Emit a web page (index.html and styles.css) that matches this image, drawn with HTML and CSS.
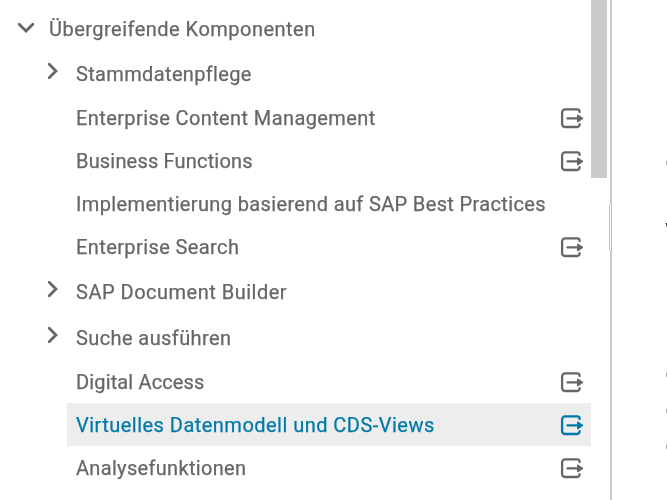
FILE: index.html
```html
<!DOCTYPE html>
<html lang="de">
<head>
<meta charset="utf-8">
<title>Übergreifende Komponenten</title>
<link rel="stylesheet" href="styles.css">
</head>
<body>
<svg class="defs" aria-hidden="true">
  <symbol id="exit" viewBox="0 0 24 22">
    <path d="M19.6 5V4.6A2.4 2.4 0 0 0 17.2 2.4H5.2A3.1 3.1 0 0 0 2.1 5.5V16.9A3.1 3.1 0 0 0 5.2 20H17.2A2.4 2.4 0 0 0 19.6 17.6V17.2" />
    <path d="M7.5 11.4H20" />
    <path class="head" d="M17.8 8.3L22.4 11.4L17.8 14.5Z" />
  </symbol>
  <symbol id="chevron" viewBox="0 0 12 18"><path d="M2.2 2.2L9 9L2.2 15.8" /></symbol>
</svg>
<div class="app">
  <nav class="tree">
    <div class="row root"><svg class="chevron"><use href="#chevron"/></svg><span class="label top">Übergreifende Komponenten</span></div>
    <div class="row branch first"><svg class="chevron"><use href="#chevron"/></svg><span class="label master">Stammdatenpflege</span></div>
    <div class="row"><span class="label content">Enterprise Content Management</span><svg class="exit"><use href="#exit"/></svg></div>
    <div class="row"><span class="label functions">Business Functions</span><svg class="exit"><use href="#exit"/></svg></div>
    <div class="row"><span class="label practices">Implementierung basierend auf SAP Best Practices</span></div>
    <div class="row"><span class="label search">Enterprise Search</span><svg class="exit"><use href="#exit"/></svg></div>
    <div class="row branch"><svg class="chevron"><use href="#chevron"/></svg><span class="label builder">SAP Document Builder</span></div>
    <div class="row branch"><svg class="chevron"><use href="#chevron"/></svg><span class="label run">Suche ausführen</span></div>
    <div class="row"><span class="label access">Digital Access</span><svg class="exit"><use href="#exit"/></svg></div>
    <div class="row selected"><span class="label views">Virtuelles Datenmodell und CDS-Views</span><svg class="exit"><use href="#exit"/></svg></div>
    <div class="row"><span class="label analysis">Analysefunktionen</span><svg class="exit"><use href="#exit"/></svg></div>
  </nav>
  <div class="scrollbar"><div class="thumb"></div></div>
  <div class="splitter"><div class="grip"></div></div>
  <main class="page"><p>e</p><p class="title">V</p><p class="gap">e</p><p>e</p><p>e</p></main>
</div>
</body>
</html>
```

FILE: styles.css
```css
* { box-sizing: border-box; }
body { margin: 0; background: #fff; color: #666; font: 20px/24px Roboto, "Noto Sans", sans-serif; overflow: hidden; }
.defs { position: absolute; width: 0; height: 0; }
.app { display: flex; width: 667px; height: 500px; overflow: hidden; will-change: transform; }
.tree { width: 591px; flex: none; }
.row { display: flex; align-items: center; height: 43px; margin-left: 67px; padding: 0 7px 0 9px; white-space: nowrap; }
.root { height: 51px; margin-left: 0; padding: 6px 0 0 21px; }
.branch { height: 46px; margin-left: 0; padding: 2px 0 0 47px; }
.first { height: 45px; padding-top: 0; }
.label { flex: 1; letter-spacing: .4px; -webkit-text-stroke: .25px currentColor; }
.top { letter-spacing: .48px; }
.master { letter-spacing: .35px; }
.functions { letter-spacing: .18px; }
.practices { letter-spacing: .36px; }
.builder { letter-spacing: .5px; }
.access { letter-spacing: .14px; }
.views { letter-spacing: .47px; }
.analysis { letter-spacing: .32px; }
.chevron { width: 12px; height: 18px; flex: none; margin-right: 17px; transform: translateY(-3px); }
.root .chevron { margin-right: 16px; transform: translate(-1px, -1px) rotate(90deg); }
.chevron, .exit { fill: none; stroke: currentColor; stroke-width: 2.8; stroke-linecap: round; }
.exit { width: 24px; height: 22px; stroke-width: 2.3; flex: none; stroke-linejoin: round; }
.exit .head, .head { fill: currentColor; stroke-width: 1.6; }
.selected { background: #ededed; color: #0079a8; }
.scrollbar { width: 16px; flex: none; }
.thumb { height: 178px; background: #cbcbcb; }
.splitter { position: relative; width: 2px; margin-left: 3px; background: #cbcbcb; flex: none; }
.grip { position: absolute; left: -1px; top: 205px; width: 3px; height: 45px; border: solid #bbb; border-width: 0 1px; background: #fff; }
.page { width: 55px; flex: none; padding: 149px 0 0 53.5px; }
.page p { margin: 0 0 12px; }
.page .title { margin-top: 46px; color: #222; font-weight: 700; }
.page .gap { margin-top: 118px; }
```
